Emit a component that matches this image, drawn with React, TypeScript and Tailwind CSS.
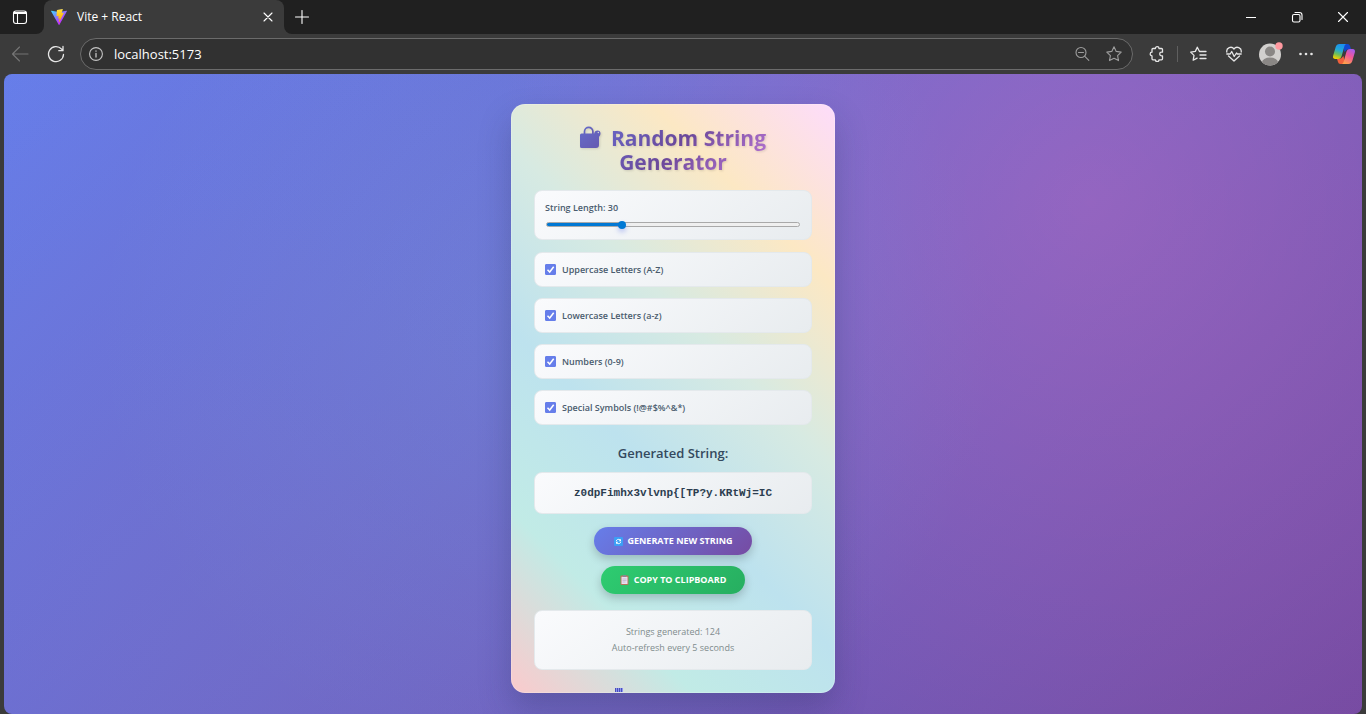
import { useState } from "react";
import type { ReactNode } from "react";

const CHARSETS = [
  { id: "upper", label: "Uppercase Letters (A-Z)" },
  { id: "lower", label: "Lowercase Letters (a-z)" },
  { id: "numbers", label: "Numbers (0-9)" },
  { id: "symbols", label: "Special Symbols (!@#$%^&*)" },
];

const PANEL =
  "rounded-lg border border-[#e4e9ec] bg-[linear-gradient(145deg,#fafbfd,#e8ecef)] ";

function Stroke({ size, children, className }: { size: number; children: ReactNode; className?: string }) {
  return (
    <svg
      width={size}
      height={size}
      viewBox={`0 0 ${size} ${size}`}
      fill="none"
      stroke="currentColor"
      strokeWidth="1.1"
      strokeLinecap="round"
      strokeLinejoin="round"
      className={className}
      aria-hidden="true"
    >
      {children}
    </svg>
  );
}

function ViteLogo() {
  return (
    <svg width="16" height="16" viewBox="0 0 256 257" aria-hidden="true">
      <defs>
        <linearGradient id="vite-a" x1="0%" x2="58%" y1="7%" y2="79%">
          <stop offset="0%" stopColor="#41D1FF" />
          <stop offset="100%" stopColor="#BD34FE" />
        </linearGradient>
        <linearGradient id="vite-b" x1="43%" x2="50%" y1="2%" y2="89%">
          <stop offset="0%" stopColor="#FFEA83" />
          <stop offset="8%" stopColor="#FFDD35" />
          <stop offset="100%" stopColor="#FFA800" />
        </linearGradient>
      </defs>
      <path
        fill="url(#vite-a)"
        d="M255.153 37.938 134.897 252.976c-2.483 4.44-8.862 4.466-11.382.048L.875 37.958c-2.746-4.814 1.371-10.646 6.827-9.67l120.385 21.517a6.537 6.537 0 0 0 2.322-.004l117.867-21.483c5.438-.991 9.574 4.796 6.877 9.62Z"
      />
      <path
        fill="url(#vite-b)"
        d="M185.432.063 96.44 17.501a3.268 3.268 0 0 0-2.634 3.014l-5.474 92.456a3.268 3.268 0 0 0 3.997 3.378l24.777-5.718c2.318-.535 4.413 1.507 3.936 3.838l-7.361 36.047c-.495 2.426 1.782 4.5 4.151 3.78l15.304-4.649c2.372-.72 4.652 1.36 4.15 3.788l-11.698 56.621c-.732 3.542 3.979 5.473 5.943 2.437l1.313-2.028 72.516-144.72c1.215-2.423-.88-5.186-3.54-4.672l-25.505 4.922c-2.396.462-4.435-1.77-3.759-4.114l16.646-57.705c.677-2.35-1.37-4.583-3.769-4.113Z"
      />
    </svg>
  );
}

function CopilotLogo() {
  return (
    <svg width="24" height="24" viewBox="0 0 24 24" aria-hidden="true">
      <defs>
        <linearGradient id="cp-a" x1="0.6" x2="0.3" y1="0" y2="1">
          <stop offset="0" stopColor="#1b8ff0" />
          <stop offset="0.4" stopColor="#22a9d8" />
          <stop offset="0.7" stopColor="#6dbd5a" />
          <stop offset="1" stopColor="#f5d000" />
        </linearGradient>
        <linearGradient id="cp-b" x1="0.8" x2="0.3" y1="0" y2="1">
          <stop offset="0" stopColor="#a45cf0" />
          <stop offset="0.45" stopColor="#f0569a" />
          <stop offset="1" stopColor="#ffa04a" />
        </linearGradient>
      </defs>
      <path fill="#1247d0" d="M11 2h4.500c1.400 0 2.100.8 2.500 2l1.100 3.500H15L12.500 10z" />
      <path fill="#f0603c" d="M13 22H8.500c-1.400 0-2.100-.8-2.500-2l-1.100-3.500H9L11.500 14z" />
      <path fill="url(#cp-a)" d="M7.500 2H14c-.9.4-1.300 1.200-1.700 2.500L9.800 13.500C9.100 16 8 17 6 17H3.500C1.300 17 .6 15.500 1.200 13.400L3.700 5C4.300 3 5.500 2 7.500 2z" />
      <path fill="url(#cp-b)" d="M16.500 22H10c.9-.4 1.300-1.200 1.700-2.500l2.500-9C14.900 8 16 7 18 7h2.500c2.200 0 2.900 1.500 2.300 3.600L20.300 19c-.6 2-1.800 3-3.800 3z" />
    </svg>
  );
}

function TitleBar() {
  return (
    <div className="flex h-[34px] items-stretch bg-[#3b3b3b] text-white">
      <div className="flex w-11 rounded-br-lg bg-[#202020]">
        <button aria-label="Tab actions" className="flex w-10 items-center justify-center">
          <Stroke size={16}>
            <rect x="1.500" y="2" width="13" height="12.500" rx="2.500" />
            <path d="M2 4.500h12M2 3.500h12M5.500 5v9" />
          </Stroke>
        </button>
      </div>
      <div className="bg-[#202020]">
        <div className="flex h-full w-60 items-center rounded-t-lg bg-[#3b3b3b] pr-2 pl-[7px]">
          <ViteLogo />
          <span className="ml-2.5 flex-1 text-[12px]">Vite + React</span>
          <button aria-label="Close tab" className="flex size-4 items-center justify-center">
            <Stroke size={10}>
              <path d="M1 1l8 8M9 1l-8 8" />
            </Stroke>
          </button>
        </div>
      </div>
      <div className="flex flex-1 rounded-bl-lg bg-[#202020]">
        <button aria-label="New tab" className="flex w-9 items-center justify-center">
          <Stroke size={14}>
            <path d="M7 .5v13M.5 7h13" />
          </Stroke>
        </button>
        <div className="flex-1" />
        <button aria-label="Minimize" className="flex w-[46px] items-center justify-center">
          <Stroke size={10}>
            <path d="M0 5.500h10" />
          </Stroke>
        </button>
        <button aria-label="Restore" className="flex w-[46px] items-center justify-center">
          <Stroke size={12}>
            <rect x="1.500" y="3.500" width="7.500" height="7.500" rx="1.500" />
            <path d="M4 1.500h4.500a2.500 2.500 0 0 1 2.500 2.500v4.500" />
          </Stroke>
        </button>
        <button aria-label="Close window" className="flex w-[46px] items-center justify-center">
          <Stroke size={12}>
            <path d="M1.500 1.500l9 9M10.500 1.500l-9 9" />
          </Stroke>
        </button>
      </div>
    </div>
  );
}

function Toolbar() {
  return (
    <div className="flex h-10 items-center bg-[#3b3b3b] text-[#e6e6e6]">
      <button aria-label="Back" className="flex w-10 justify-center text-[#757575]">
        <Stroke size={18}>
          <path d="M17 9H1.500M8.500 2L1.500 9l7 7" />
        </Stroke>
      </button>
      <button aria-label="Reload" className="flex w-8 justify-center">
        <Stroke size={18}>
          <path strokeWidth="1.300" d="M16.500 9.500A7.500 7.500 0 1 1 14.500 4L16 5.500M16 1.500v4.200h-4.200" />
        </Stroke>
      </button>
      <div className="ml-2 flex h-8 flex-1 items-center rounded-full border border-[#6b6b6b] bg-[#313131] pr-2.5 pl-2">
        <Stroke size={14} className="text-[#c4c4c4]">
          <circle cx="7" cy="7" r="6.400" />
          <path d="M7 6.300v3.700M7 4v.2" strokeWidth="1.300" />
        </Stroke>
        <input
          aria-label="Address"
          defaultValue="localhost:5173"
          className="ml-[11px] min-w-0 flex-1 bg-transparent text-[13px] leading-5 text-white outline-none"
        />
        <button aria-label="Zoom" className="text-[#9d9d9d]">
          <Stroke size={16}>
            <circle cx="7" cy="6.500" r="5" />
            <path d="M4.500 6.500h5M10.800 10.300l4 4" />
          </Stroke>
        </button>
        <button aria-label="Add to favorites" className="ml-4 text-[#9d9d9d]">
          <Stroke size={16}>
            <path d="M8 .8l2.200 4.600 5 .7-3.600 3.500.9 5L8 12.200l-4.500 2.400.9-5L.8 6.100l5-.7z" />
          </Stroke>
        </button>
      </div>
      <button aria-label="Extensions" className="ml-4 flex">
        <Stroke size={16}>
          <path
            strokeWidth="1.300"
            d="M4 2.500h2.400a1.800 1.800 0 0 1 3.600 0h2.500a1 1 0 0 1 1 1v2.700h-1a1.800 1.800 0 0 0 0 3.600h1v3a1 1 0 0 1-1 1H10a1.800 1.800 0 0 1-3.600 0H4a1 1 0 0 1-1-1V9.800a1.800 1.800 0 0 1 0-3.600V3.500a1 1 0 0 1 1-1z"
          />
        </Stroke>
      </button>
      <span className="mr-3 ml-3 h-4 w-px bg-[#5f5f5f]" />
      <button aria-label="Favorites" className="flex">
        <Stroke size={17}>
          <path strokeWidth="1.300" d="M9.500 5.500L7.300 1.200 5.300 5.400l-4.600.7 3.300 3.300-.8 4.800 3.900-2.100M10 5.500h6M10 9h6M10 12.500h6" />
        </Stroke>
      </button>
      <button aria-label="Browser essentials" className="ml-[19px] flex">
        <Stroke size={16}>
          <path strokeWidth="1.300" d="M.8 6A4 4 0 0 1 8 3a4 4 0 0 1 7.200 3M2.500 10L8 15l5.500-5M.8 8h3.400l1.500-2.500 2.500 5L10.500 7l.8 1h3.900" />
        </Stroke>
      </button>
      <button aria-label="Profile" className="ml-4 flex">
        <svg width="26" height="24" viewBox="0 0 26 24" aria-hidden="true">
          <defs>
            <clipPath id="avatar">
              <circle cx="12" cy="12.500" r="11" />
            </clipPath>
          </defs>
          <circle cx="12" cy="12.500" r="11" fill="#d2d0ce" />
          <g clipPath="url(#avatar)" fill="#8a8785">
            <circle cx="12" cy="9.500" r="5" />
            <ellipse cx="12" cy="20.500" rx="8" ry="5" />
          </g>
          <circle cx="21" cy="4" r="3.700" fill="#ff99a0" />
        </svg>
      </button>
      <button aria-label="Settings and more" className="ml-[15px] flex">
        <svg width="14" height="4" viewBox="0 0 14 4" fill="currentColor" aria-hidden="true">
          <circle cx="1.500" cy="2" r="1.300" />
          <circle cx="7" cy="2" r="1.300" />
          <circle cx="12.500" cy="2" r="1.300" />
        </svg>
      </button>
      <button aria-label="Copilot" className="mr-2.5 ml-[19px] flex">
        <CopilotLogo />
      </button>
    </div>
  );
}

function LockIcon() {
  return (
    <svg width="21" height="22" viewBox="0 0 21 22" className="mr-2.5 inline-block align-[-2px]" aria-hidden="true">
      <defs>
        <linearGradient id="lock" x1="0" x2="1" y1="0" y2="1">
          <stop offset="0" stopColor="#656bc8" />
          <stop offset="1" stopColor="#6458b0" />
        </linearGradient>
      </defs>
      <path d="M4.500 9V5.500a4.200 4.200 0 0 1 8.400 0V9" fill="none" stroke="url(#lock)" strokeWidth="1.700" />
      <path
        fill="url(#lock)"
        d="M1.500 7.500h12.700A3.600 3.600 0 0 1 17.500 4.500 3 3 0 0 1 20.500 7.500c0 1.500-.8 2.800-1.500 3.300V19a3 3 0 0 1-3 3H1.500A1.500 1.500 0 0 1 0 20.500V9A1.500 1.500 0 0 1 1.500 7.500z"
      />
      <circle cx="18.300" cy="6.500" r=".7" fill="#d8dfda" />
    </svg>
  );
}

function RefreshEmoji() {
  return (
    <svg width="9" height="9" viewBox="0 0 9 9" aria-hidden="true">
      <rect width="9" height="9" rx="1" fill="#3b9ff5" />
      <path d="M2.200 4.200A2.300 2.300 0 0 1 6 2.900M6.800 4.800A2.300 2.300 0 0 1 3 6.100" fill="none" stroke="#fff" strokeWidth=".9" />
      <path d="M7 1.800v2.400H4.700zM2 7.200V4.800h2.300z" fill="#fff" />
    </svg>
  );
}

function ClipboardEmoji() {
  return (
    <svg width="9" height="10" viewBox="0 0 9 10" aria-hidden="true">
      <rect x=".5" y=".5" width="8" height="9.500" rx=".8" fill="#b5745c" />
      <rect x="1.500" y="1.800" width="6" height="7.200" fill="#e9dff0" />
      <rect x="3" y="0" width="3" height="2" rx=".5" fill="#8f8594" />
      <path d="M2.500 4h4M2.500 5.500h4M2.500 7h3" stroke="#b5a8c4" strokeWidth=".6" />
    </svg>
  );
}

function Generator() {
  const [length, setLength] = useState(30);
  const [enabled, setEnabled] = useState<Record<string, boolean>>({
    upper: true,
    lower: true,
    numbers: true,
    symbols: true,
  });

  return (
    <section className="w-[324px] rounded-[14px] border border-white/20 bg-[linear-gradient(45deg,#fbcacc,#c1ebe6,#bde2ee,#d7eae2,#fce8c4,#fddcfb)] bg-origin-border px-[22px] pt-[21px] shadow-[0_16px_32px_rgba(31,38,80,0.25)]">
      <h1 className="bg-[linear-gradient(135deg,#667eea_0%,#6b489a_50%,#e08cf0_100%)] bg-clip-text text-center text-[21px] leading-6 font-bold text-transparent drop-shadow-[1px_1px_1px_rgba(0,0,0,0.12)]">
        <LockIcon />
        Random String
        <br />
        Generator
      </h1>

      <div className={PANEL + "mt-4 h-[50px] px-2.5 pt-2.5"}>
        <label htmlFor="length" className="block text-[9px] leading-[14px] font-semibold text-[#4a5c6e]">
          String Length: {length}
        </label>
        <input
          id="length"
          type="range"
          min={1}
          max={100}
          value={length}
          onChange={(e) => setLength(Number(e.target.value))}
          className="mt-[7px] ml-px block h-[5px] w-[254px] appearance-none rounded-full border border-[#a9a9a9] bg-[#efefef] [&::-webkit-slider-thumb]:size-2 [&::-webkit-slider-thumb]:appearance-none [&::-webkit-slider-thumb]:rounded-full [&::-webkit-slider-thumb]:bg-[#0078d4] [&::-webkit-slider-thumb]:shadow-[0_3px_5px_rgba(102,126,234,0.4)]"
          style={{ backgroundImage: `linear-gradient(to right, #0078d4 ${length}%, transparent ${length}%)`, backgroundOrigin: "border-box" }}
        />
      </div>

      <div className="mt-3 grid gap-[11px]">
        {CHARSETS.map(({ id, label }) => (
          <label
            key={id}
            className={PANEL + "flex h-[35px] items-center gap-1.5 px-2.5 text-[9px] leading-[14px] font-semibold text-[#4a5c6e]"}
          >
            <span className="grid size-[11px] *:col-start-1 *:row-start-1">
              <input
                type="checkbox"
                checked={enabled[id]}
                onChange={(e) => setEnabled({ ...enabled, [id]: e.target.checked })}
                className="peer size-[11px] appearance-none rounded-[1px] border border-[#667eea] bg-white checked:bg-[#667eea]"
              />
              <svg viewBox="0 0 11 11" className="pointer-events-none hidden size-[11px] peer-checked:block" aria-hidden="true">
                <path d="M2.500 5.800l2.200 2.200 4-5.300" fill="none" stroke="#fff" strokeWidth="1.500" />
              </svg>
            </span>
            {label}
          </label>
        ))}
      </div>

      <h2 className="mt-[18px] text-center text-[13px] leading-5 font-semibold text-[#34495e]">Generated String:</h2>
      <output
        className={
          PANEL +
          "mt-[9px] flex h-[42px] items-center justify-center font-['Liberation_Mono',monospace] text-[11px] font-bold text-[#2c3e50]"
        }
      >
        {"z0dpFimhx3vlvnp{[TP?y.KRtWj=IC"}
      </output>

      <div className="mt-[13px] flex flex-col items-center gap-[11px] text-[9px] font-bold text-white">
        <button className="flex h-7 items-center gap-[5px] rounded-full bg-[linear-gradient(135deg,#667eea,#764ba2)] px-5 shadow-[0_4px_10px_rgba(0,0,0,0.2)]">
          <RefreshEmoji />
          GENERATE NEW STRING
        </button>
        <button className="flex h-7 items-center gap-[5px] rounded-full bg-[linear-gradient(135deg,#2ecc71,#27ae60)] px-[19px] shadow-[0_4px_10px_rgba(0,0,0,0.2)]">
          <ClipboardEmoji />
          COPY TO CLIPBOARD
        </button>
      </div>

      <div className={PANEL + "mt-4 flex h-[60px] flex-col justify-center text-center text-[9px] leading-4 text-[#7f8c8d]"}>
        <p>Strings generated: 124</p>
        <p>Auto-refresh every 5 seconds</p>
      </div>

      <div className="flex h-[22px] items-end pl-[81px]">
        <svg width="8" height="4" viewBox="0 0 8 4" shapeRendering="crispEdges" aria-hidden="true">
          <rect width="8" height="4" fill="#8b93f0" />
          <path d="M0 0h1v4H0zM2 0h1v4H2zM4 0h1v4H4zM6 0h1v4H6z" fill="#4a50b8" />
        </svg>
      </div>
    </section>
  );
}

export default function App() {
  return (
    <div className="flex h-screen min-h-[714px] flex-col overflow-hidden bg-[#3b3b3b] font-['Open_Sans','Noto_Sans',sans-serif]">
      <header>
        <TitleBar />
        <Toolbar />
      </header>
      <main className="mx-1 flex flex-1 items-start justify-center rounded-lg bg-[radial-gradient(circle_at_20%_80%,rgba(120,119,198,0.3)_0%,transparent_50%),radial-gradient(circle_at_80%_20%,rgba(255,119,198,0.25)_0%,transparent_50%),radial-gradient(circle_at_40%_40%,rgba(120,219,255,0.15)_0%,transparent_50%),linear-gradient(135deg,#667eea_0%,#764ba2_100%)] pt-[30px] pr-5">
        <Generator />
      </main>
    </div>
  );
}
